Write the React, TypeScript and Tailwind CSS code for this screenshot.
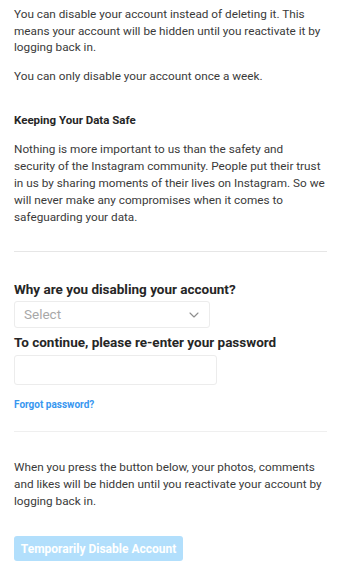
export default function App() {
  return (
    <div className="min-h-[574px] w-[341px] bg-white px-[14px] pt-[6px] font-['Roboto',sans-serif] text-[#3a3a3a]">
      <p className="text-[11.75px] leading-[16.5px]">
        You can disable your account instead of deleting it. This means your account will be hidden until you
        reactivate it by logging back in.
      </p>
      <p className="mt-[12px] text-[11.75px] leading-[16.5px]">You can only disable your account once a week.</p>

      <h3 className="mt-[28px] text-[11.5px] font-bold leading-[16px] text-[#262626]">Keeping Your Data Safe</h3>
      <p className="mt-[13px] text-[11.75px] leading-[17px]">
        Nothing is more important to us than the safety and security of the Instagram community. People put
        their trust in us by sharing moments of their lives on Instagram. So we will never make any compromises
        when it comes to safeguarding your data.
      </p>

      <div className="mt-[25px] border-t border-[#e6e6e6]" />

      <h2 className="mt-[28px] text-[13.5px] font-bold leading-[18px] text-[#262626]">
        Why are you disabling your account?
      </h2>
      <div className="mt-[3px] flex h-[27px] w-[196px] items-center justify-between rounded-[3px] border border-[#ececec] pl-[9px] pr-[10px]">
        <span className="text-[13.5px] text-[#a8a8a8]">Select</span>
        <svg width="10" height="6" viewBox="0 0 10 6" fill="none">
          <path d="M1 1l4 4 4-4" stroke="#8e8e8e" strokeWidth="1.1" strokeLinecap="round" strokeLinejoin="round" />
        </svg>
      </div>

      <h2 className="mt-[5px] text-[13.5px] font-bold leading-[18px] text-[#262626]">
        To continue, please re-enter your password
      </h2>
      <div className="mt-[4px] h-[30px] w-[203px] rounded-[3px] border border-[#ececec]" />

      <a className="mt-[14px] block text-[10px] font-bold leading-[12px] text-[#3897f0]">Forgot password?</a>

      <div className="mt-[20px] border-t border-[#efefef]" />

      <p className="mt-[27px] text-[11.75px] leading-[17px]">
        When you press the button below, your photos, comments and likes will be hidden until you reactivate
        your account by logging back in.
      </p>

      <button className="mt-[26px] flex h-[25px] w-[169px] items-center justify-center rounded-[3px] bg-[#b2dffc] text-[12px] font-bold text-white">
        Temporarily Disable Account
      </button>
    </div>
  );
}
